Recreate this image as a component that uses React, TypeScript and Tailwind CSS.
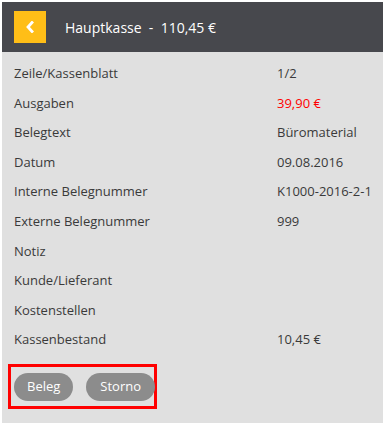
const rows: { label: string; value?: string; red?: boolean }[] = [
  { label: "Zeile/Kassenblatt", value: "1/2" },
  { label: "Ausgaben", value: "39,90 €", red: true },
  { label: "Belegtext", value: "Büromaterial" },
  { label: "Datum", value: "09.08.2016" },
  { label: "Interne Belegnummer", value: "K1000-2016-2-1" },
  { label: "Externe Belegnummer", value: "999" },
  { label: "Notiz" },
  { label: "Kunde/Lieferant" },
  { label: "Kostenstellen" },
  { label: "Kassenbestand", value: "10,45 €" },
]

export default function App() {
  return (
    <div className="bg-white p-[2px] w-[385px] h-[426px] font-['Open_Sans',sans-serif]">
      <div className="bg-[#e0e0e0] h-[421px]">
        {/* header */}
        <div className="h-[50px] bg-[#47484d] flex items-center pl-3">
          <button className="w-8 h-8 bg-[#ffbe17] flex items-center justify-center">
            <svg width="10" height="12" viewBox="0 0 10 12">
              <path d="M7 1.5 L3 6 L7 10.5" fill="none" stroke="#fff" strokeWidth="2.8" strokeLinecap="square" />
            </svg>
          </button>
          <span className="ml-[19px] text-white text-[14px]">Hauptkasse&nbsp; -&nbsp; 110,45 €</span>
        </div>

        <div className="pt-[7px]">
          {rows.map((r) => (
            <div key={r.label} className="flex items-center h-[29.6px] text-[13px] text-[#3a3a3a]">
              <span className="pl-3 w-[275px]">{r.label}</span>
              <span className={r.red ? "text-[#ff0000]" : ""}>{r.value}</span>
            </div>
          ))}
        </div>

        {/* actions */}
        <div className="mt-[9px] ml-[6px] w-[149px] border-[3px] border-[#ff0000] pl-[3px] pt-[6px] pb-[5px] flex gap-[13px]">
          <button className="h-7 px-[13px] rounded-full bg-[#8c8c8c] text-white text-[13px]">Beleg</button>
          <button className="h-7 px-[14px] rounded-full bg-[#8c8c8c] text-white text-[13px]">Storno</button>
        </div>
      </div>
    </div>
  )
}
